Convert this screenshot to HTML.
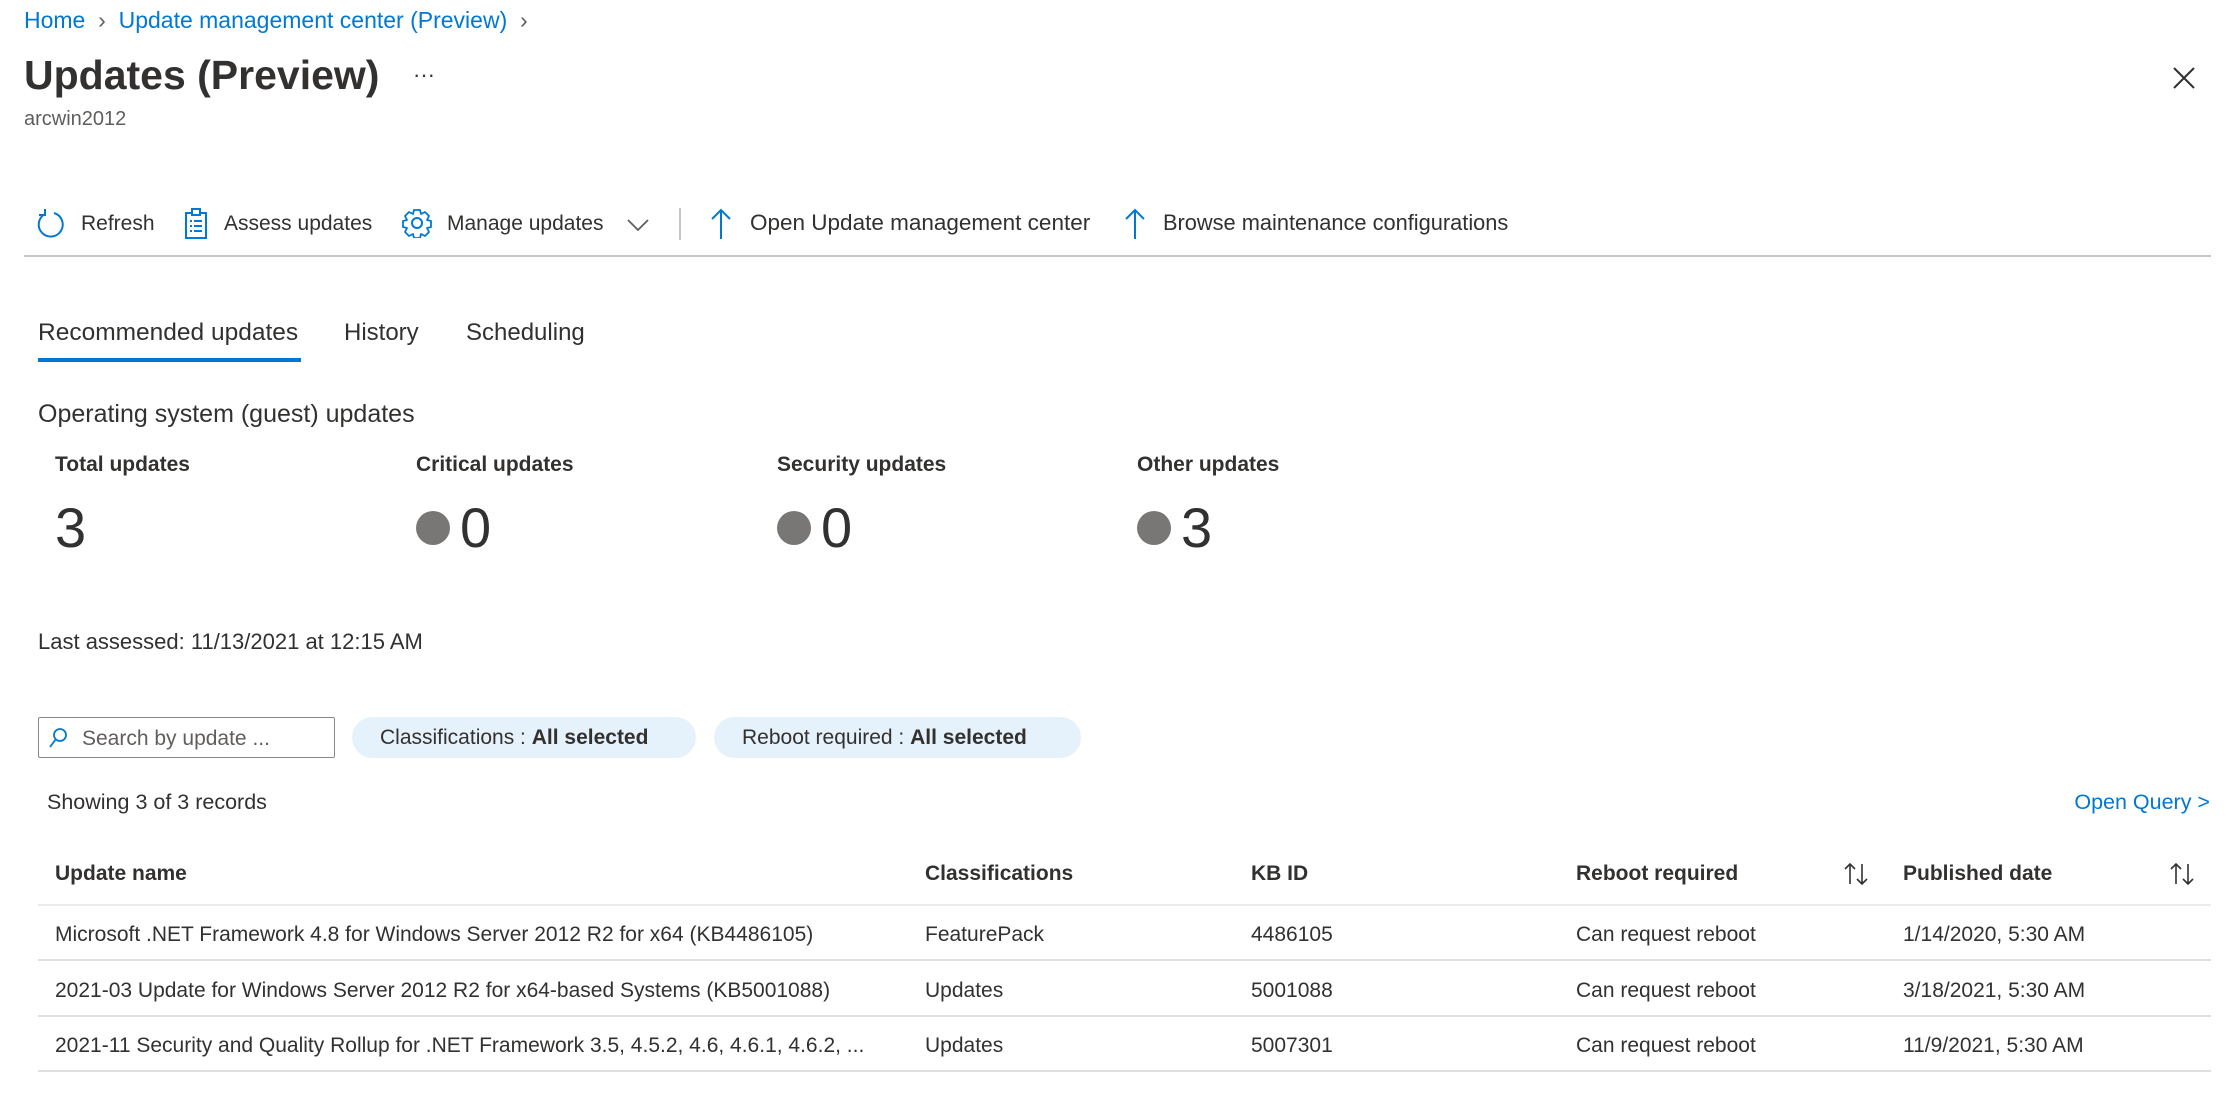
<!DOCTYPE html>
<html><head><meta charset="utf-8"><style>
*{margin:0;padding:0;box-sizing:border-box}
body{width:2227px;height:1112px;background:#fff;font-family:"Liberation Sans",sans-serif;color:#323130;position:relative;overflow:hidden}
.a{position:absolute;white-space:nowrap;line-height:1}
.blue{color:#0078d4}
.line{position:absolute;height:2px;background:#e1dfdd;left:38px;width:2173px}
.dot{display:inline-block;width:34px;height:34px;border-radius:50%;background:#797775;vertical-align:middle;margin-right:10px;position:relative;top:-4px}
.pill{position:absolute;top:717px;height:41px;border-radius:21px;background:#e6f2fb;font-size:21px;line-height:41px;padding-left:28px}
</style></head><body>
<div class="a blue" style="left:24px;top:9px;font-size:23px">Home <span style="color:#605e5c">&nbsp;›&nbsp;</span> Update management center (Preview) <span style="color:#605e5c">&nbsp;›</span></div>
<div class="a" style="left:24px;top:55px;font-size:41px;font-weight:bold;color:#323130">Updates (Preview)</div>
<div class="a" style="left:413px;top:64px;font-size:22px">···</div>
<div class="a" style="left:24px;top:109px;font-size:20px;color:#605e5c">arcwin2012</div>
<svg class="a" style="left:2172px;top:66px" width="24" height="24" viewBox="0 0 24 24"><path d="M2 2L22 22M22 2L2 22" stroke="#323130" stroke-width="2"/></svg>

<svg class="a" style="left:36px;top:208px" width="30" height="32" viewBox="0 0 30 32"><path d="M9 6A12 12 0 1 0 18 5" fill="none" stroke="#0078d4" stroke-width="2"/><path d="M9 1V7H3" fill="none" stroke="#0078d4" stroke-width="2"/></svg>
<div class="a" style="left:81px;top:213px;font-size:21px">Refresh</div>
<svg class="a" style="left:184px;top:208px" width="24" height="32" viewBox="0 0 24 32"><rect x="2" y="5" width="20" height="25" fill="none" stroke="#0078d4" stroke-width="2"/><rect x="8" y="1" width="8" height="6" fill="#fff" stroke="#0078d4" stroke-width="2"/><path d="M6 13h2M10 13h8M6 18h2M10 18h8M6 23h2M10 23h8" stroke="#0078d4" stroke-width="2"/></svg>
<div class="a" style="left:224px;top:213px;font-size:21px">Assess updates</div>
<svg class="a" style="left:402px;top:208px" width="30" height="30" viewBox="0 0 30 30"><circle cx="15" cy="15" r="5" fill="none" stroke="#0078d4" stroke-width="2"/><path d="M12 2h6l1 4 4-2 4 4-2 4 4 1v6l-4 1 2 4-4 4-4-2-1 4h-6l-1-4-4 2-4-4 2-4-4-1v-6l4-1-2-4 4-4 4 2z" fill="none" stroke="#0078d4" stroke-width="1.8" stroke-linejoin="round"/></svg>
<div class="a" style="left:447px;top:213px;font-size:21px">Manage updates</div>
<svg class="a" style="left:626px;top:218px" width="24" height="14" viewBox="0 0 24 14"><path d="M2 2L12 12L22 2" fill="none" stroke="#605e5c" stroke-width="1.8"/></svg>
<div class="a" style="left:679px;top:208px;width:2px;height:32px;background:#c8c6c4"></div>
<svg class="a" style="left:710px;top:208px" width="22" height="32" viewBox="0 0 22 32"><path d="M11 2V31M2 11L11 2L20 11" fill="none" stroke="#0078d4" stroke-width="2"/></svg>
<div class="a" style="left:750px;top:212px;font-size:22.5px">Open Update management center</div>
<svg class="a" style="left:1124px;top:208px" width="22" height="32" viewBox="0 0 22 32"><path d="M11 2V31M2 11L11 2L20 11" fill="none" stroke="#0078d4" stroke-width="2"/></svg>
<div class="a" style="left:1163px;top:212px;font-size:21.8px">Browse maintenance configurations</div>
<div class="a" style="left:24px;top:255px;width:2187px;height:2px;background:#c8c6c4"></div>

<div class="a" style="left:38px;top:321px;font-size:24.5px">Recommended updates</div>
<div class="a" style="left:344px;top:321px;font-size:24px">History</div>
<div class="a" style="left:466px;top:321px;font-size:24px">Scheduling</div>
<div class="a" style="left:38px;top:358px;width:263px;height:4px;background:#0078d4"></div>

<div class="a" style="left:38px;top:402px;font-size:25px">Operating system (guest) updates</div>
<div class="a" style="left:55px;top:454px;font-size:21px;font-weight:bold">Total updates</div>
<div class="a" style="left:416px;top:454px;font-size:21px;font-weight:bold">Critical updates</div>
<div class="a" style="left:777px;top:454px;font-size:21px;font-weight:bold">Security updates</div>
<div class="a" style="left:1137px;top:454px;font-size:21px;font-weight:bold">Other updates</div>
<div class="a" style="left:55px;top:500px;font-size:56px">3</div>
<div class="a" style="left:416px;top:500px;font-size:56px"><span class="dot"></span>0</div>
<div class="a" style="left:777px;top:500px;font-size:56px"><span class="dot"></span>0</div>
<div class="a" style="left:1137px;top:500px;font-size:56px"><span class="dot"></span>3</div>

<div class="a" style="left:38px;top:631px;font-size:22px">Last assessed: 11/13/2021 at 12:15 AM</div>

<div class="a" style="left:38px;top:717px;width:297px;height:41px;border:1.5px solid #8a8886;border-radius:2px"></div>
<svg class="a" style="left:48px;top:727px" width="20" height="22" viewBox="0 0 20 22"><circle cx="12" cy="8" r="6" fill="none" stroke="#0078d4" stroke-width="1.8"/><path d="M8 12L2 20" stroke="#0078d4" stroke-width="1.8"/></svg>
<div class="a" style="left:82px;top:728px;font-size:21px;color:#605e5c">Search by update ...</div>
<div class="pill" style="left:352px;width:344px">Classifications : <b>All selected</b></div>
<div class="pill" style="left:714px;width:367px">Reboot required : <b>All selected</b></div>

<div class="a" style="left:47px;top:792px;font-size:21.5px">Showing 3 of 3 records</div>
<div class="a blue" style="right:17px;top:792px;font-size:21.5px">Open Query &gt;</div>

<div class="a" style="left:55px;top:863px;font-size:21px;font-weight:bold">Update name</div>
<div class="a" style="left:925px;top:863px;font-size:21px;font-weight:bold">Classifications</div>
<div class="a" style="left:1251px;top:863px;font-size:21px;font-weight:bold">KB ID</div>
<div class="a" style="left:1576px;top:863px;font-size:21px;font-weight:bold">Reboot required</div>
<div class="a" style="left:1903px;top:863px;font-size:21px;font-weight:bold">Published date</div>
<svg class="a" style="left:1842px;top:862px" width="30" height="24" viewBox="0 0 30 24"><path d="M8 22V2M3 7L8 2L13 7M20 2V22M15 17L20 22L25 17" fill="none" stroke="#323130" stroke-width="1.6"/></svg>
<svg class="a" style="left:2168px;top:862px" width="30" height="24" viewBox="0 0 30 24"><path d="M8 22V2M3 7L8 2L13 7M20 2V22M15 17L20 22L25 17" fill="none" stroke="#323130" stroke-width="1.6"/></svg>
<div class="line" style="top:904px;background:#edebe9"></div>

<div class="a" style="left:55px;top:924px;font-size:21px">Microsoft .NET Framework 4.8 for Windows Server 2012 R2 for x64 (KB4486105)</div>
<div class="a" style="left:925px;top:924px;font-size:21px">FeaturePack</div>
<div class="a" style="left:1251px;top:924px;font-size:21px">4486105</div>
<div class="a" style="left:1576px;top:924px;font-size:21px">Can request reboot</div>
<div class="a" style="left:1903px;top:924px;font-size:21px">1/14/2020, 5:30 AM</div>
<div class="line" style="top:959px"></div>

<div class="a" style="left:55px;top:980px;font-size:21px">2021-03 Update for Windows Server 2012 R2 for x64-based Systems (KB5001088)</div>
<div class="a" style="left:925px;top:980px;font-size:21px">Updates</div>
<div class="a" style="left:1251px;top:980px;font-size:21px">5001088</div>
<div class="a" style="left:1576px;top:980px;font-size:21px">Can request reboot</div>
<div class="a" style="left:1903px;top:980px;font-size:21px">3/18/2021, 5:30 AM</div>
<div class="line" style="top:1015px"></div>

<div class="a" style="left:55px;top:1035px;font-size:21px">2021-11 Security and Quality Rollup for .NET Framework 3.5, 4.5.2, 4.6, 4.6.1, 4.6.2, ...</div>
<div class="a" style="left:925px;top:1035px;font-size:21px">Updates</div>
<div class="a" style="left:1251px;top:1035px;font-size:21px">5007301</div>
<div class="a" style="left:1576px;top:1035px;font-size:21px">Can request reboot</div>
<div class="a" style="left:1903px;top:1035px;font-size:21px">11/9/2021, 5:30 AM</div>
<div class="line" style="top:1070px"></div>
</body></html>
